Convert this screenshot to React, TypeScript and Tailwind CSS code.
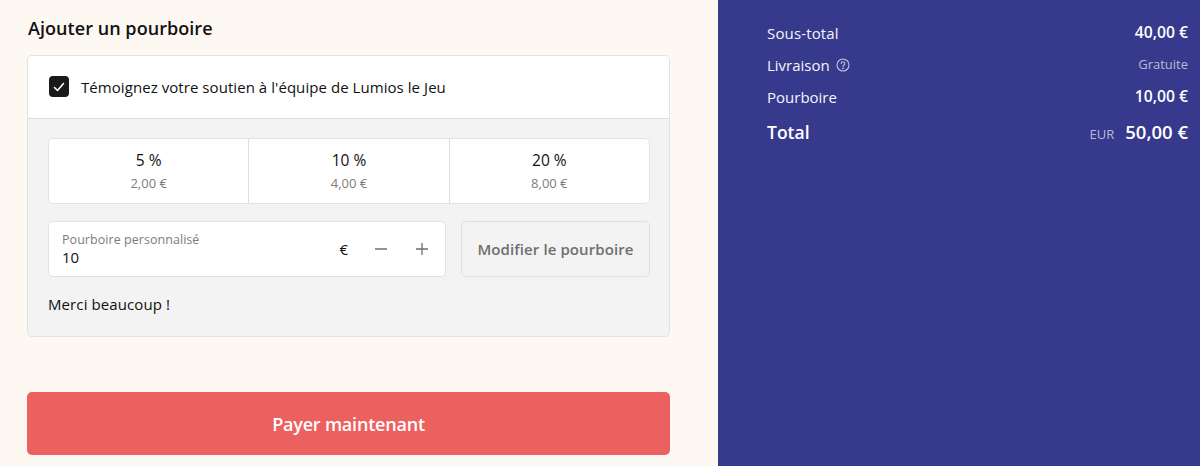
import React from "react";

function TipOption({ pct, amt, last }: { pct: string; amt: string; last?: boolean }) {
  return (
    <div className={"flex-1 flex flex-col items-center pt-[11px] " + (last ? "" : "border-r border-[#dedede]")}>
      <span className="text-[15.5px] leading-[20px] text-[#111111]">{pct}</span>
      <span className="text-[13px] leading-[18px] mt-[4px] text-[#7d7d7d]">{amt}</span>
    </div>
  );
}

export default function App() {
  return (
    <div className="flex w-[1200px] h-[466px] overflow-hidden font-['Open_Sans','Noto_Sans',sans-serif]">
      <div className="w-[718px] shrink-0 bg-[#fdf8f1] pl-[27px] pr-[48px] flex flex-col">
        <h2 className="mt-[15px] ml-[1px] h-[26px] text-[18px] tracking-[0.05px] leading-[26px] font-semibold text-[#111111]">Ajouter un pourboire</h2>
        <div className="mt-[14px] h-[282px] rounded-[5px] border border-[#e2e2e0] overflow-hidden flex flex-col">
          <div className="h-[63px] pb-[1px] bg-white border-b border-[#dedede] flex items-center pl-[21px] shrink-0">
            <div className="w-5 h-[21px] rounded-[4px] bg-[#1a1a1a] flex items-center justify-center">
              <svg viewBox="0 0 12 12" className="w-[12px] h-[12px]" fill="none" stroke="#fff" strokeWidth="1.6" strokeLinecap="round" strokeLinejoin="round">
                <path d="M1.5 6.5 L4.5 9.5 L10.5 2.5" />
              </svg>
            </div>
            <span className="ml-[12px] text-[15px] tracking-[0.06px] leading-[20px] text-[#111111]">Témoignez votre soutien à l'équipe de Lumios le Jeu</span>
          </div>
          <div className="flex-1 bg-[#f3f3f3] pl-[20px] pr-[19px] pt-[19px]">
            <div className="h-[66px] flex rounded-[5px] bg-white border border-[#e2e2e2] overflow-hidden">
              <TipOption pct="5 %" amt="2,00 €" />
              <TipOption pct="10 %" amt="4,00 €" />
              <TipOption pct="20 %" amt="8,00 €" last />
            </div>
            <div className="mt-[17px] flex gap-[15px]">
              <div className="w-[398px] h-[56px] bg-white border border-[#e2e2e2] rounded-[5px] flex items-center pl-[13px]">
                <div className="flex-1 flex flex-col">
                  <span className="text-[12.5px] tracking-[0.05px] leading-[17px] text-[#7d7d7d]">Pourboire personnalisé</span>
                  <span className="text-[15px] leading-[19px] text-[#111111]">10</span>
                </div>
                <span className="text-[15px] text-[#111111]">€</span>
                <svg viewBox="0 0 14 14" className="w-[14px] h-[14px] ml-[26px]" stroke="#6f6f6f" strokeWidth="1.3" fill="none"><path d="M1 7h12" /></svg>
                <svg viewBox="0 0 14 14" className="w-[14px] h-[14px] ml-[27px] mr-[16px]" stroke="#6f6f6f" strokeWidth="1.3" fill="none"><path d="M1 7h12M7 1v12" /></svg>
              </div>
              <div className="w-[189px] h-[56px] border border-[#dfdfdf] rounded-[5px] bg-[#f3f3f3] flex items-center justify-center">
                <span className="text-[15px] tracking-[0.1px] font-semibold text-[#6f6f6f]">Modifier le pourboire</span>
              </div>
            </div>
            <p className="mt-[17px] text-[15px] tracking-[0.1px] leading-[20px] text-[#111111]">Merci beaucoup !</p>
          </div>
        </div>
        <button className="mt-[55px] h-[63px] pt-[2px] rounded-[5px] bg-[#ed6060] text-white text-[18px] tracking-[-0.2px] font-semibold flex items-center justify-center">Payer maintenant</button>
      </div>
      <div className="flex-1 bg-[#36398c] pl-[49px] pr-[12px] pt-[17px] text-[#f5f5fa] flex flex-col">
        <div className="h-[32px] flex items-center justify-between text-[15px]">
          <span className="tracking-[0.15px]">Sous-total</span><span className="text-[15.7px] font-semibold text-white">40,00 €</span>
        </div>
        <div className="h-[32px] flex items-center justify-between text-[15px]">
          <span className="flex items-center gap-[6px]">Livraison
            <svg viewBox="0 0 14 14" className="w-[14px] h-[14px]" fill="none" stroke="#c3c4de" strokeWidth="1.1" strokeLinecap="round">
              <circle cx="7" cy="7" r="6" />
              <path d="M5.2 5.5a1.8 1.8 0 1 1 2.8 1.5c-.6.4-1 .7-1 1.4" />
              <circle cx="7" cy="10.3" r=".35" fill="#c3c4de" />
            </svg>
          </span>
          <span className="text-[13px] text-[#b9bad8]">Gratuite</span>
        </div>
        <div className="h-[32px] flex items-center justify-between text-[15px]">
          <span>Pourboire</span><span className="text-[15.7px] font-semibold text-white">10,00 €</span>
        </div>
        <div className="h-[38px] flex items-center justify-between">
          <span className="text-[17.5px] font-semibold text-white">Total</span>
          <span className="flex items-baseline gap-[11px]">
            <span className="text-[13px] text-[#b9bad8]">EUR</span>
            <span className="text-[18.5px] font-semibold text-white">50,00 €</span>
          </span>
        </div>
      </div>
    </div>
  );
}
